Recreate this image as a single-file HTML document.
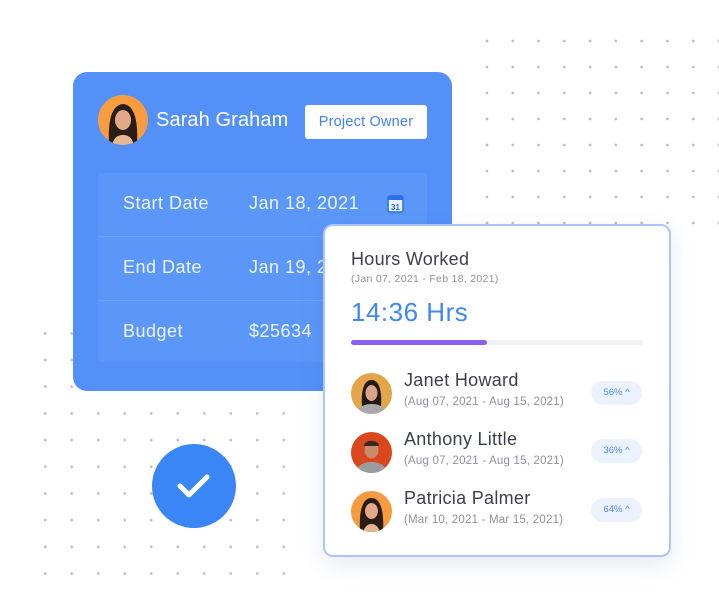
<!DOCTYPE html>
<html><head><meta charset="utf-8"><style>
*{margin:0;padding:0;box-sizing:border-box}
body{width:719px;height:611px;background:#fff;position:relative;overflow:hidden;font-family:"Liberation Sans",sans-serif}
.abs{position:absolute}
.dots1{left:474px;top:28px;width:245px;height:206px;background-image:radial-gradient(circle,#b9bcc4 1.1px,transparent 1.6px);background-size:25.8px 26px;background-position:0 0}
.dots2{left:32px;top:320px;width:264px;height:266px;background-image:radial-gradient(circle,#b9bcc4 1.1px,transparent 1.6px);background-size:26.5px 26.7px}
.card{left:73px;top:72px;width:379px;height:319px;background:#5391f8;border-radius:14px}
.tbl{left:98px;top:173px;width:329px;height:189px;background:#5b97f9;border-radius:3px}
.row{position:absolute;left:0;width:329px;height:64px;border-bottom:1px solid #6ba2fa;color:#eef4ff;font-size:18px;letter-spacing:.5px}
.row span{position:absolute;top:20px}
.t{color:#fff}
.badge{left:305px;top:105px;width:122px;height:34px;background:#fff;border-radius:3px;color:#3f83f5;font-size:14.5px;text-align:center;line-height:34px;letter-spacing:.2px}
.hw{left:323px;top:224px;width:348px;height:333px;background:#fff;border:2px solid #a8c6fb;border-radius:10px;box-shadow:0 8px 24px rgba(60,80,140,.12)}
.name{font-size:18px;color:#3b3f4a;position:absolute;left:79px;letter-spacing:.3px}
.sub{font-size:11.5px;color:#8d919a;position:absolute;left:79px;letter-spacing:.2px}
.pill{position:absolute;left:266px;width:51px;height:24px;background:#ebf2fe;border-radius:12px;color:#4f8ef6;font-size:9.5px;text-align:center;line-height:24px}
</style></head><body>
<div class="abs dots1"></div>
<div class="abs dots2"></div>
<div class="abs card"></div>
<svg class="abs" style="left:98px;top:95px" width="50" height="50" viewBox="0 0 50 50"><circle cx="25" cy="25" r="25" fill="#f79c3f"/><clipPath id="c1"><circle cx="25" cy="25" r="25"/></clipPath><g clip-path="url(#c1)"><path d="M11 50 C10 30 12 10 25 9 C38 10 40 30 39 50Z" fill="#2a1d18"/><ellipse cx="25" cy="25" rx="8" ry="10" fill="#e2a88a"/><path d="M14 50 C16 42 20 40 25 40 C30 40 34 42 36 50Z" fill="#e8b694"/></g></svg>
<div class="abs t" style="left:156px;top:109px;font-size:20px;letter-spacing:.1px">Sarah Graham</div>
<div class="abs badge">Project Owner</div>
<div class="abs tbl">
<div class="row" style="top:0"><span style="left:25px">Start Date</span><span style="left:151px">Jan 18, 2021</span></div>
<div class="row" style="top:64px"><span style="left:25px">End Date</span><span style="left:151px">Jan 19, 2021</span></div>
<div class="row" style="top:128px;border:none"><span style="left:25px">Budget</span><span style="left:151px">$25634</span></div>
</div>
<svg class="abs" style="left:387px;top:194px" width="17" height="19" viewBox="0 0 17 19"><rect x="1" y="2" width="15" height="16" rx="2" fill="#eaf2ff" stroke="#2a6ee8" stroke-width="1.5"/><rect x="1" y="2" width="15" height="4" fill="#2a6ee8"/><text x="8.5" y="16" font-size="8" text-anchor="middle" fill="#2a6ee8" font-family="Liberation Sans" font-weight="bold">31</text></svg>
<div class="abs" style="left:152px;top:444px;width:84px;height:84px;border-radius:50%;background:#3a86f7"></div>
<svg class="abs" style="left:175px;top:470px" width="38" height="32" viewBox="0 0 38 32"><path d="M5 16 L14 25 L32 7" fill="none" stroke="#fff" stroke-width="5" stroke-linecap="round" stroke-linejoin="round"/></svg>
<div class="abs hw">
<div class="abs" style="left:26px;top:23px;font-size:18px;color:#3d414b;letter-spacing:.3px">Hours Worked</div>
<div class="abs" style="left:26px;top:47px;font-size:10.5px;color:#8d919a;letter-spacing:.3px">(Jan 07, 2021 - Feb 18, 2021)</div>
<div class="abs" style="left:26px;top:71px;font-size:26px;color:#3f86f6;letter-spacing:.5px">14:36 Hrs</div>
<div class="abs" style="left:26px;top:114px;width:292px;height:5px;background:#f0f1f3;border-radius:3px"></div>
<div class="abs" style="left:26px;top:114px;width:136px;height:5px;background:#8a62f3;border-radius:3px"></div>
<svg class="abs" style="left:26px;top:147px" width="41" height="41"><circle cx="20.5" cy="20.5" r="20.5" fill="#e4a54a"/><clipPath id="c2"><circle cx="20.5" cy="20.5" r="20.5"/></clipPath><g clip-path="url(#c2)"><path d="M11 34 C10 20 12 7 20.5 7 C29 7 31 20 30 34Z" fill="#231916"/><ellipse cx="20.5" cy="20" rx="6" ry="8" fill="#d8a58a"/><path d="M5 41 C8 33 14 31 20.5 31 C27 31 33 33 36 41Z" fill="#a9a9ab"/></g></svg>
<div class="name" style="top:144px">Janet Howard</div>
<div class="sub" style="top:170px">(Aug 07, 2021 - Aug 15, 2021)</div>
<div class="pill" style="top:155px">56% ^</div>
<svg class="abs" style="left:26px;top:206px" width="41" height="41"><circle cx="20.5" cy="20.5" r="20.5" fill="#d9481d"/><clipPath id="c3"><circle cx="20.5" cy="20.5" r="20.5"/></clipPath><g clip-path="url(#c3)"><ellipse cx="20.5" cy="18" rx="7" ry="8.5" fill="#c98c6c"/><path d="M13 14 C13 7 28 7 28 14Z" fill="#3a2a22"/><path d="M4 41 C7 32 14 30 20.5 30 C27 30 34 32 37 41Z" fill="#9c9c9e"/></g></svg>
<div class="name" style="top:203px">Anthony Little</div>
<div class="sub" style="top:229px">(Aug 07, 2021 - Aug 15, 2021)</div>
<div class="pill" style="top:213px">36% ^</div>
<svg class="abs" style="left:26px;top:265px" width="41" height="41"><circle cx="20.5" cy="20.5" r="20.5" fill="#f89b3f"/><clipPath id="c4"><circle cx="20.5" cy="20.5" r="20.5"/></clipPath><g clip-path="url(#c4)"><path d="M9 41 C8 24 10 7 20.5 7 C31 7 33 24 32 41Z" fill="#2a1d18"/><ellipse cx="20.5" cy="20" rx="6.5" ry="8" fill="#e2a88a"/><path d="M12 41 C14 35 17 33 20.5 33 C24 33 27 35 29 41Z" fill="#e8b694"/></g></svg>
<div class="name" style="top:262px">Patricia Palmer</div>
<div class="sub" style="top:288px">(Mar 10, 2021 - Mar 15, 2021)</div>
<div class="pill" style="top:272px">64% ^</div>
</div>
</body></html>
